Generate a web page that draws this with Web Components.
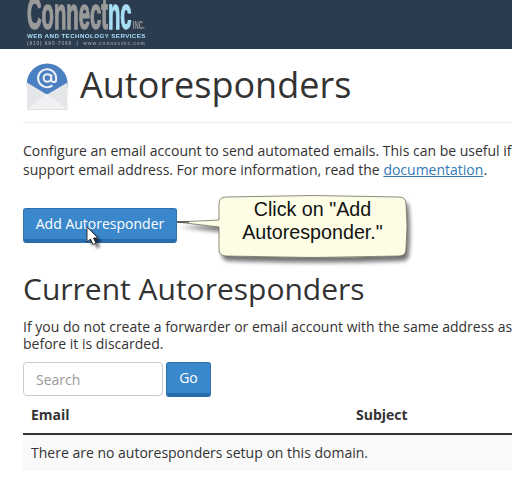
<!DOCTYPE html>
<html>
<head>
<meta charset="utf-8">
<title>Autoresponders</title>
<style>
    html, body { margin: 0; padding: 0; background: #fff; overflow: hidden; }
    body { width: 512px; height: 491px; font-family: "Open Sans", sans-serif; color: #333; }
</style>
</head>
<body>
<top-bar></top-bar>
<page-body>
    <page-title>Autoresponders</page-title>
    <intro-text>Configure an email account to send automated emails. This can be useful if you want to send a message<br>support email address. For more information, read the <a>documentation</a>.</intro-text>
    <add-action label="Add Autoresponder"></add-action>
    <section-heading>Current Autoresponders</section-heading>
    <intro-text class="tight">If you do not create a forwarder or email account with the same address as this autoresponder, mail will<br>before it is discarded.</intro-text>
    <search-form></search-form>
    <empty-table message="There are no autoresponders setup on this domain."></empty-table>
</page-body>
<script>
class TopBar extends HTMLElement {
    constructor() {
        super();
        this.attachShadow({ mode: 'open' });
        this.shadowRoot.innerHTML = `
            <style>
                :host { display: block; height: 49px; background: #2b3c4f; overflow: hidden; }
                .logo { margin-left: 27px; width: 122px; height: 49px; filter: blur(.4px); }
                .name {
                    display: flex; align-items: baseline; height: 32px;
                    font: bold 44px/28px "Liberation Sans", sans-serif;
                    color: #9a9a9a; -webkit-text-stroke: 1.4px currentColor;
                    transform: scaleX(.46); transform-origin: 0 0; white-space: nowrap;
                }
                .name b { color: #a9dff5; }
                .name i {
                    font: bold 10px/1 "Liberation Sans", sans-serif; -webkit-text-stroke: 0;
                    margin-left: 3px; transform: scaleX(1.3); transform-origin: 0 0;
                }
                .tag { font: bold 6.2px/8px "Liberation Sans", sans-serif; color: #a9dff5; letter-spacing: .42px; white-space: nowrap; }
                .contact { font: bold 4.8px/8px "Liberation Sans", sans-serif; color: #8f979f; letter-spacing: .88px; white-space: nowrap; }
            </style>
            <div class="logo">
                <div class="name">Connect<b>nc</b><i>INC.</i></div>
                <div class="tag">WEB AND TECHNOLOGY SERVICES</div>
                <div class="contact">(910) 695-7068 &nbsp;|&nbsp; www.connectnc.com</div>
            </div>
        `;
    }
}

class PageBody extends HTMLElement {
    constructor() {
        super();
        this.attachShadow({ mode: 'open' });
        this.shadowRoot.innerHTML = `
            <style>
                :host { display: block; padding: 0 0 0 23px; position: relative; width: 700px; }
            </style>
            <slot></slot>
        `;
    }
}

class PageTitle extends HTMLElement {
    constructor() {
        super();
        this.attachShadow({ mode: 'open' });
        this.shadowRoot.innerHTML = `
            <style>
                :host { display: flex; align-items: center; gap: 11px; height: 73px; width: 489px; border-bottom: 1px solid #eee; }
                svg { display: block; margin: 3px 0 0 3px; flex: none; }
                h1 { margin: 0; font: 400 36px/46px "Open Sans", sans-serif; color: #333; position: relative; top: -1px; }
            </style>
            <svg width="43" height="48" viewBox="0 0 43 48">
                <circle cx="21.2" cy="21" r="20.5" fill="#4a7fc1"/>
                <path d="M1 19.5 L20 31 Q21 31.6 22 31 L41.5 19.5 V46.5 H1 Z" fill="#e5e6e9"/>
                <path d="M1 46.5 L19 32 Q21 30.5 23 32 L41.5 46.5 Z" fill="#f1f1f3" stroke="#ebecee" stroke-width=".5"/>
                <path d="M1 46.5 H41.5" stroke="#dcdde0" stroke-width=".8"/>
                <path d="M26.5 22.4 a9 9 0 1 1 3.6 -6.9 v1.2 a2.4 2.4 0 0 1 -4.8 0 v-5.4 M25.2 15 a3.8 3.8 0 1 1 -7.6 0 a3.8 3.8 0 1 1 7.6 0" fill="none" stroke="#eef2f8" stroke-width="2"/>
            </svg>
            <h1><slot></slot></h1>
        `;
    }
}

class IntroText extends HTMLElement {
    constructor() {
        super();
        this.attachShadow({ mode: 'open' });
        this.shadowRoot.innerHTML = `
            <style>
                :host { display: block; font: 400 14px/19px "Open Sans", sans-serif; color: #333; white-space: nowrap; padding-top: 18px; }
                :host(.tight) { padding-top: 0; line-height: 17px; margin-top: 9px; }
                ::slotted(a) { color: #337ab7; text-decoration: underline; }
            </style>
            <slot></slot>
        `;
    }
}

class AddAction extends HTMLElement {
    constructor() {
        super();
        this.attachShadow({ mode: 'open' });
        this.shadowRoot.innerHTML = `
            <style>
                :host { display: block; position: relative; height: 35px; margin-top: 29px; }
                button {
                    display: block; box-sizing: border-box; width: 154px; height: 35px; padding: 0;
                    background: #3a87cc; color: #fff; border: 1px solid #2f72ad; border-bottom: 4px solid #2b6cad;
                    border-radius: 3px; font: 400 14px/1 "Open Sans", sans-serif;
                }
                .callout { position: absolute; left: 0; top: 0; width: 400px; height: 60px; }
                .callout svg { position: absolute; left: 0; top: 0; overflow: visible; }
                .callout p {
                    position: absolute; left: 196px; top: -10px; width: 187px; margin: 0; text-align: center;
                    font: 400 19.7px/23px "Liberation Sans", sans-serif; color: #111;
                }
                .cursor { position: absolute; left: 63px; top: 18px; overflow: visible; }
            </style>
            <button></button>
            <div class="callout">
                <svg width="400" height="60" viewBox="0 0 400 60">
                    <defs>
                        <filter id="sh" x="-10%" y="-20%" width="125%" height="150%">
                            <feGaussianBlur stdDeviation="2.2"/>
                        </filter>
                    </defs>
                    <path d="M154 14 L196 12 V-4 Q196 -11 203 -11 Q290 -14 376 -11 Q383 -11 383 -4 Q385 18 383 41 Q383 48 376 48 Q290 51 203 48 Q196 48 196 41 V19 Z" transform="translate(3 5)" fill="#000" opacity=".55" filter="url(#sh)"/>
                    <path d="M154 14 L196 12 V-4 Q196 -11 203 -11 Q290 -14 376 -11 Q383 -11 383 -4 Q385 18 383 41 Q383 48 376 48 Q290 51 203 48 Q196 48 196 41 V19 Z" fill="#fdfde6" stroke="#6f6f60" stroke-width=".8"/>
                    <path d="M154 14 H166" stroke="#222" stroke-width="1"/>
                </svg>
                <p>Click on "Add<br>Autoresponder."</p>
            </div>
            <svg class="cursor" width="14" height="20" viewBox="0 0 14 20">
                <defs><filter id="cs"><feGaussianBlur stdDeviation="1.6"/></filter></defs>
                <path d="M1 1 V16 L4.5 13 L7 18.5 L10 17.2 L7.5 12 L12 12 Z" transform="translate(4 4)" fill="#000" opacity=".6" filter="url(#cs)"/>
                <path d="M1 1 V16 L4.5 13 L7 18.5 L10 17.2 L7.5 12 L12 12 Z" fill="#fff" stroke="#222" stroke-width=".9"/>
            </svg>
        `;
        this.shadowRoot.querySelector('button').textContent = this.getAttribute('label');
    }
}

class SectionHeading extends HTMLElement {
    constructor() {
        super();
        this.attachShadow({ mode: 'open' });
        this.shadowRoot.innerHTML = `
            <style>
                :host { display: block; margin-top: 26px; }
                h2 { margin: 0; font: 400 30px/40px "Open Sans", sans-serif; color: #333; }
            </style>
            <h2><slot></slot></h2>
        `;
    }
}

class SearchForm extends HTMLElement {
    constructor() {
        super();
        this.attachShadow({ mode: 'open' });
        this.shadowRoot.innerHTML = `
            <style>
                :host { display: flex; gap: 3px; align-items: flex-start; margin-top: 10px; }
                input {
                    box-sizing: border-box; width: 140px; height: 34px; padding: 0 12px; background: #fff;
                    border: 1px solid #ccc; border-radius: 4px; font: 400 14px "Open Sans", sans-serif; color: #333;
                }
                input::placeholder { color: #999; opacity: 1; }
                button {
                    box-sizing: border-box; width: 45px; height: 35px; padding: 0; background: #3a87cc; color: #fff;
                    border: 1px solid #2f72ad; border-bottom: 4px solid #2b6cad; border-radius: 3px;
                    font: 400 14px/1 "Open Sans", sans-serif;
                }
            </style>
            <input type="text" placeholder="Search">
            <button type="button">Go</button>
        `;
    }
}

class EmptyTable extends HTMLElement {
    constructor() {
        super();
        this.attachShadow({ mode: 'open' });
        this.shadowRoot.innerHTML = `
            <style>
                :host { display: block; width: 489px; font: 400 14px/20px "Open Sans", sans-serif; color: #333; }
                .head { display: grid; grid-template-columns: 325px 1fr; height: 36px; align-items: center; padding-left: 8px; border-bottom: 2px solid #333; font-weight: 700; }
                .row { height: 36px; display: flex; align-items: center; padding-left: 8px; background: #f9f9f9; }
            </style>
            <div class="head"><span>Email</span><span>Subject</span></div>
            <div class="row"></div>
        `;
        this.shadowRoot.querySelector('.row').textContent = this.getAttribute('message');
    }
}

customElements.define('top-bar', TopBar);
customElements.define('page-body', PageBody);
customElements.define('page-title', PageTitle);
customElements.define('intro-text', IntroText);
customElements.define('add-action', AddAction);
customElements.define('section-heading', SectionHeading);
customElements.define('search-form', SearchForm);
customElements.define('empty-table', EmptyTable);
</script>
</body>
</html>
